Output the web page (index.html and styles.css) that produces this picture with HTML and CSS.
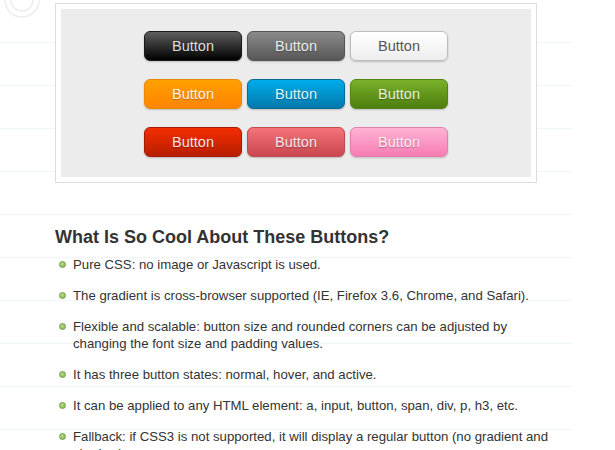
FILE: index.html
```html
<!DOCTYPE html>
<html lang="en">
<head>
    <meta charset="UTF-8">
    <meta name="viewport" content="width=device-width, initial-scale=1.0">
    <title>CSS3 Buttons</title>
    <link rel="stylesheet" href="styles.css">
</head>
<body>

    <div class="page">
        <svg class="logo-rings" width="50" height="24" viewBox="0 0 50 24">
            <circle cx="22" cy="0" r="17" fill="none" stroke="#ebebeb" stroke-width="1.3"/>
            <circle cx="22" cy="0" r="11" fill="none" stroke="#ebebeb" stroke-width="1.3"/>
        </svg>

        <div class="demo-frame">
            <div class="demo">
                <div class="demo-row">
                    <span class="button black">Button</span>
                    <span class="button gray">Button</span>
                    <span class="button white">Button</span>
                </div>
                <div class="demo-row">
                    <span class="button orange">Button</span>
                    <span class="button blue">Button</span>
                    <span class="button green">Button</span>
                </div>
                <div class="demo-row">
                    <span class="button red">Button</span>
                    <span class="button rosy">Button</span>
                    <span class="button pink">Button</span>
                </div>
            </div>
        </div>

        <h2>What Is So Cool About These Buttons?</h2>
        <ul class="features">
            <li>Pure CSS: no image or Javascript is used.</li>
            <li>The gradient is cross-browser supported (IE, Firefox 3.6, Chrome, and Safari).</li>
            <li>Flexible and scalable: button size and rounded corners can be adjusted by changing the font size and padding values.</li>
            <li>It has three button states: normal, hover, and active.</li>
            <li>It can be applied to any HTML element: a, input, button, span, div, p, h3, etc.</li>
            <li>Fallback: if CSS3 is not supported, it will display a regular button (no gradient and shadow).</li>
        </ul>
    </div>

</body>
</html>
```

FILE: styles.css
```css
/* page */
body {
    margin: 0;
    background-color: #fff;
    color: #333;
    font-family: Arial, "Liberation Sans", sans-serif;
    overflow: hidden;
}

.page {
    position: relative;
    width: 573px;
    padding: 3px 0 0 55px;
    box-sizing: border-box;
    min-height: 450px;
    background-image: repeating-linear-gradient(to bottom,
        transparent 0, transparent 20.5px,
        #f0f5f7 20.5px, #f0f5f7 21.5px);
}

.logo-rings {
    position: absolute;
    left: 0;
    top: 0;
}

/* demo box */
.demo-frame {
    width: 482px;
    box-sizing: border-box;
    padding: 5px;
    border: 1px solid #dcdcdc;
    background-color: #fff;
}

.demo {
    display: flex;
    flex-direction: column;
    align-items: center;
    gap: 18px;
    padding: 22px 0 20px;
    background-color: #ececec;
}

.demo-row {
    display: flex;
    gap: 5px;
}

.button {
    display: block;
    width: 98px;
    box-sizing: border-box;
    padding: 6px 0;
    border: 1px solid;
    border-radius: 6px;
    font-size: 14.5px;
    line-height: 16px;
    text-align: center;
    text-shadow: 0 1px 1px rgba(0, 0, 0, 0.3);
    box-shadow: 0 1px 2px rgba(0, 0, 0, 0.2);
}

.black {
    color: #dedede;
    border-color: #1a1a1a;
    background: linear-gradient(#5e5e5e, #000);
}

.gray {
    color: #ececec;
    border-color: #555;
    background: linear-gradient(#8a8a8a, #575757);
}

.white {
    color: #555;
    border-color: #bdbdbd;
    background: linear-gradient(#fff, #ededed);
    text-shadow: 0 1px 0 rgba(255, 255, 255, 0.6);
}

.orange {
    color: #fef4e9;
    border-color: #e88a06;
    background: linear-gradient(#ffa000, #ff8500);
}

.blue {
    color: #e0f2f9;
    border-color: #0a6a93;
    background: linear-gradient(#00acec, #0079ab);
}

.green {
    color: #e8f0de;
    border-color: #538312;
    background: linear-gradient(#79b22a, #4e7d0e);
}

.red {
    color: #fbe3e3;
    border-color: #a51a05;
    background: linear-gradient(#f42d00, #b71e00);
}

.rosy {
    color: #fae7e9;
    border-color: #bf4a54;
    background: linear-gradient(#f4737b, #c9474f);
}

.pink {
    color: #feeef5;
    border-color: #de82ab;
    background: linear-gradient(#ffb3d5, #f77cb2);
}

/* text */
h2 {
    margin: 44px 0 9px;
    font-size: 18px;
    line-height: 20px;
    font-weight: bold;
    color: #333;
}

.features {
    width: 482px;
    margin: 0;
    padding: 0 0 0 18px;
    list-style: none;
    font-size: 13.2px;
    line-height: 17px;
}

.features li {
    position: relative;
    margin-bottom: 14px;
}

.features li::before {
    content: "";
    position: absolute;
    left: -14px;
    top: 5px;
    width: 5px;
    height: 5px;
    border-radius: 50%;
    border: 1px solid #6f9c43;
    background: radial-gradient(circle at 40% 35%, #b9dd8c, #7fb24c);
}
```
